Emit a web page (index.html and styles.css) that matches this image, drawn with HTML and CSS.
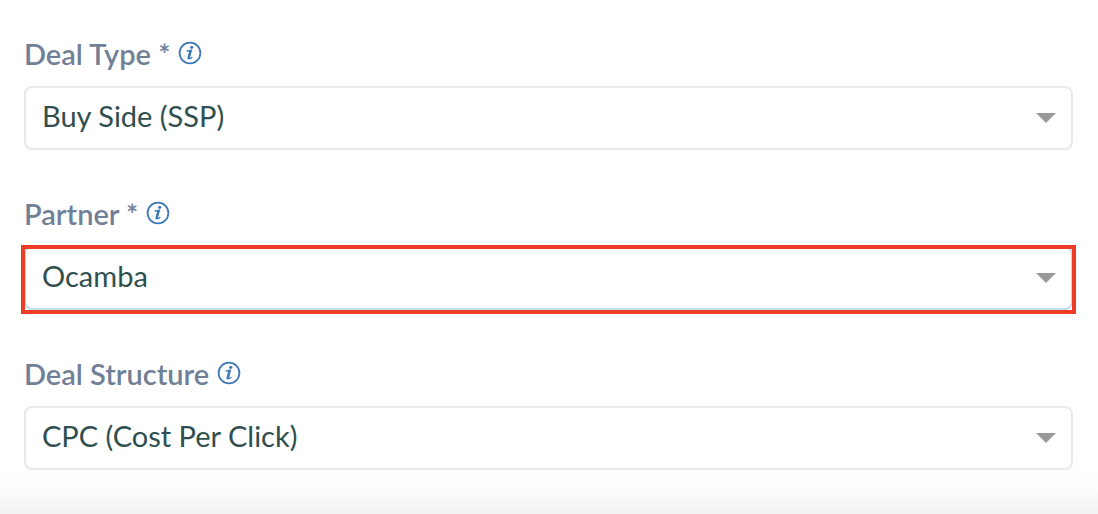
FILE: index.html
```
<!DOCTYPE html>
<html lang="en">
  <head>
    <meta charset="utf-8">
    <title>Deal</title>
    <link rel="stylesheet" href="styles.css">
  </head>
  <body>
    <svg class="sprite" aria-hidden="true">
      <symbol id="info" viewBox="0 0 24 24">
        <circle cx="12" cy="12" r="10.4" fill="none" stroke="currentColor" stroke-width="1.8"/>
        <circle cx="13.7" cy="6.3" r="1.6" fill="currentColor"/>
        <path d="M9.2 10 L13.2 9.4 L11.2 17 Q11 18.6 13.9 16.4" fill="none" stroke="currentColor" stroke-width="1.3" stroke-linecap="round"/>
        <path d="M12.4 10 L10.6 17.2" fill="none" stroke="currentColor" stroke-width="2.4" stroke-linecap="round"/>
      </symbol>
    </svg>

    <form class="deal-form">
      <div class="field">
        <div class="field-head">
          <label for="deal-type">Deal Type *</label>
          <svg class="info"><use href="#info"/></svg>
        </div>
        <div class="select-box">
          <select id="deal-type">
            <option>Buy Side (SSP)</option>
          </select>
        </div>
      </div>

      <div class="field">
        <div class="field-head">
          <label for="partner">Partner *</label>
          <svg class="info"><use href="#info"/></svg>
        </div>
        <div class="select-box highlight">
          <select id="partner">
            <option>Ocamba</option>
          </select>
        </div>
      </div>

      <div class="field">
        <div class="field-head">
          <label for="deal-structure">Deal Structure</label>
          <svg class="info"><use href="#info"/></svg>
        </div>
        <div class="select-box">
          <select id="deal-structure">
            <option>CPC (Cost Per Click)</option>
          </select>
        </div>
      </div>
    </form>
  </body>
</html>
```

FILE: styles.css
```
* {
    box-sizing: border-box;
}
body {
    margin: 0;
    background-color: #fff;
    font-family: Lato, "Open Sans", sans-serif;
    font-size: 29px;
}
.sprite {
    display: none;
}
.deal-form {
    min-height: 100vh;
    padding: 33px 25px 0 24px;
    background: linear-gradient(to top, #f2f2f2, #fbfbfb 22px, #fff 48px);
}
.field {
    padding-bottom: 43px;
}
.field-head {
    display: flex;
    align-items: center;
    gap: 8px;
    height: 40px;
    margin-bottom: 13px;
    color: #718096;
    font-weight: 600;
}
.info {
    width: 24px;
    height: 24px;
    color: #4179b8;
}
.select-box {
    position: relative;
}
select {
    display: block;
    width: 100%;
    height: 64px;
    padding: 0 48px 6px 16px;
    appearance: none;
    border: 2px solid #e8e8ed;
    border-radius: 8px;
    background-color: #fff;
    color: #2f4f4f;
    font: inherit;
}
/* Dropdown arrow */
.select-box::before {
    content: "";
    position: absolute;
    top: 27px;
    right: 17px;
    border: 10px solid transparent;
    border-top-color: #999;
    border-bottom: 0;
    pointer-events: none;
}
/* Red frame around the partner field */
.highlight select {
    border-color: #bfdcee;
}
.highlight::after {
    content: "";
    position: absolute;
    top: -1px;
    right: -3px;
    bottom: -4px;
    left: -3px;
    border: 4px solid #ec3e25;
    pointer-events: none;
}
```
